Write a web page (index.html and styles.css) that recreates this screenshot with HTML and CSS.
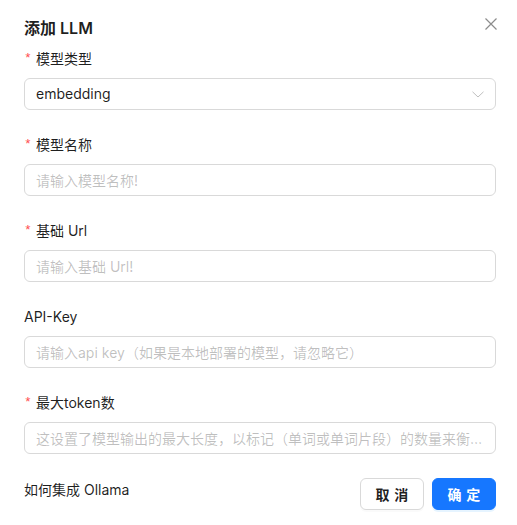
FILE: index.html
```html
<!DOCTYPE html>
<html>
<head>
<meta charset="utf-8">
<title>添加 LLM</title>
<link rel="stylesheet" href="styles.css">
</head>
<body>
<div class="modal">
	<div class="modal-head">
		<div class="modal-title">添加 LLM</div>
		<span class="modal-close">
			<svg width="12" height="12" viewBox="0 0 12 12"><path d="M0.5 0.5L11.5 11.5M11.5 0.5L0.5 11.5" stroke="#8c8c8c" stroke-width="1.2" fill="none"/></svg>
		</span>
	</div>
	<form class="form">
		<div class="item">
			<label class="label"><span class="req">*</span>模型类型</label>
			<div class="select">
				<span class="select-value">embedding</span>
				<svg class="arrow" width="12" height="7" viewBox="0 0 12 7"><path d="M0.5 0.8L6 6L11.5 0.8" stroke="#bfbfbf" stroke-width="1" fill="none"/></svg>
			</div>
		</div>
		<div class="item">
			<label class="label"><span class="req">*</span>模型名称</label>
			<input class="input" type="text" placeholder="请输入模型名称!">
		</div>
		<div class="item">
			<label class="label"><span class="req">*</span>基础 Url</label>
			<input class="input" type="text" placeholder="请输入基础 Url!">
		</div>
		<div class="item">
			<label class="label">API-Key</label>
			<input class="input" type="text" placeholder="请输入api key（如果是本地部署的模型，请忽略它）">
		</div>
		<div class="item">
			<label class="label"><span class="req">*</span>最大token数</label>
			<input class="input" type="text" placeholder="这设置了模型输出的最大长度，以标记（单词或单词片段）的数量来衡量。">
		</div>
	</form>
	<div class="footer">
		<a class="help">如何集成 Ollama</a>
		<div class="btns">
			<button class="btn" type="button"><span>取消</span></button>
			<button class="btn btn-primary" type="button"><span>确定</span></button>
		</div>
	</div>
</div>
</body>
</html>
```
FILE: styles.css
```css
html, body{margin:0; padding:0; background:#fff;}
body{font-family:Inter, "Noto Sans CJK SC", sans-serif; font-size:14px; color:rgba(0,0,0,0.88);}
.modal{padding:16px 21px 15px 24px; box-sizing:border-box; width:517px; height:525px;}
.modal-head{display:flex; justify-content:space-between; align-items:flex-start; height:24px; margin-bottom:8px;}
.modal-title{font-size:16px; font-weight:600; line-height:24px; height:24px;}
.modal-close{display:block; margin-top:2px; margin-right:-1px; width:12px; height:12px; cursor:pointer;}
.modal-close svg{display:block;}
.form{width:472px;}
.item{margin-bottom:24px;}
.label{display:flex; align-items:center; height:22px; line-height:22px; margin-bottom:8px; white-space:nowrap;}
.req{display:block; width:8px; margin-right:4px; color:#ff4d4f; font-family:"Liberation Mono", monospace; font-size:13px; line-height:22px; height:22px;}
.input, .select{display:block; width:100%; box-sizing:border-box; height:32px; border:1px solid #d9d9d9; border-radius:6px; padding:4px 11px; font:inherit; font-size:14px; line-height:22px; color:rgba(0,0,0,0.88); background:#fff; outline:none; text-overflow:ellipsis;}
.input::placeholder{color:rgba(0,0,0,0.25);}
.select{display:flex; align-items:center; justify-content:space-between; padding-right:11px;}
.arrow{display:block;}
.footer{display:flex; justify-content:space-between; align-items:flex-start; width:472px;}
.help{display:block; height:22px; line-height:22px; padding-top:1px; color:rgba(0,0,0,0.88);}
.btns{display:flex; gap:8px;}
.btn{height:32px; width:64px; border:1px solid #d9d9d9; border-radius:6px; background:#fff; font:inherit; font-size:14px; font-weight:600; color:rgba(0,0,0,0.88); padding:0; box-shadow:0 2px 0 rgba(0,0,0,0.02); cursor:pointer;}
.btn span{letter-spacing:0.34em; margin-right:-0.34em;}
.btn-primary{background:#1677ff; border-color:#1677ff; color:#fff; box-shadow:0 2px 0 rgba(5,145,255,0.1);}
```
